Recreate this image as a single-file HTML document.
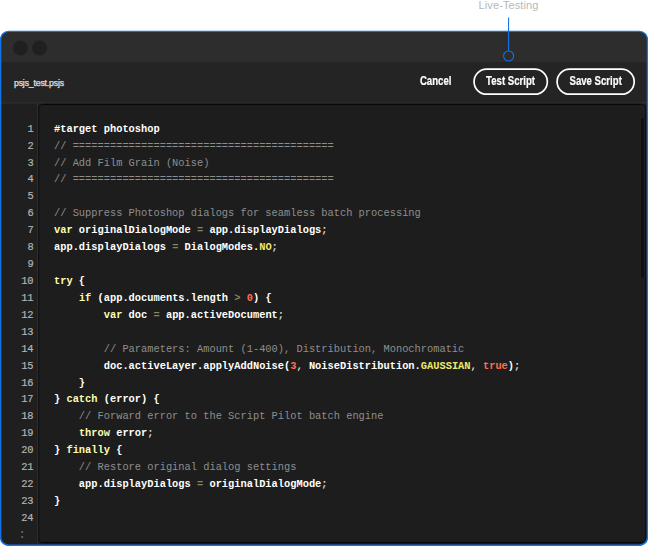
<!DOCTYPE html>
<html>
<head>
<meta charset="utf-8">
<title>psjs_test.psjs</title>
<style>
html,body{margin:0;padding:0;background:#fff;}
body{width:648px;height:546px;position:relative;overflow:hidden;font-family:"Liberation Sans",sans-serif;}
#frame{position:absolute;left:0;top:0;width:648px;height:546px;}
.abs{position:absolute;white-space:nowrap;}
#live{left:478px;top:-2.2px;width:61px;text-align:center;font-size:11px;line-height:14px;color:#b8b8b8;letter-spacing:0.1px;}
#fname{left:14px;top:75.5px;font-size:8.7px;line-height:14px;color:#e0e0e0;letter-spacing:-0.16px;-webkit-text-stroke:0.25px #e0e0e0;}
.btn{font-weight:bold;font-size:12px;line-height:14px;color:#fff;text-align:center;-webkit-text-stroke:0.2px #fff;}
.btn span{display:inline-block;transform:scaleX(0.8);transform-origin:50% 50%;}
#cancel{left:410px;width:52px;top:74px;}
#test{left:473px;width:75px;top:74px;}
#save{left:556.3px;width:78px;top:74px;}
#gutter{left:0;top:120.7px;width:33.6px;-webkit-text-stroke:0.2px #b4b4b4;text-align:right;font-family:"Liberation Mono",monospace;font-size:10.36px;line-height:16.93px;color:#b4b4b4;}
#gutter div{height:16.93px;}
#code{left:54px;top:120.7px;font-family:"Liberation Mono",monospace;font-size:10.36px;line-height:16.93px;color:#fff;font-weight:bold;}
#code div{height:16.93px;white-space:pre;}
#more{left:18.4px;top:526.5px;font-family:"Liberation Mono",monospace;font-size:12px;line-height:17px;color:#5c6474;font-weight:bold;}
.c{color:#8e8e8e;font-weight:normal;}
.k{color:#ffffb0;}
.o{color:#88835c;}
.n{color:#ff6e4a;}
.y{color:#f0e86a;}
.p{color:#d8d8d8;}
</style>
</head>
<body>
<svg id="frame" width="648" height="546" viewBox="0 0 648 546">
  <defs>
    <clipPath id="win"><path d="M8.50,31.4H639.50A8,8 0 0 1 647.5,39.40V537.40A8,8 0 0 1 639.50,545.4H8.50A8,8 0 0 1 0.5,537.40V39.40A8,8 0 0 1 8.50,31.4Z"/></clipPath>
    <filter id="blur1" x="-5%" y="-5%" width="110%" height="110%"><feGaussianBlur stdDeviation="0.7"/></filter>
    <clipPath id="codeclip"><rect x="38.3" y="103.8" width="607.6" height="439.4" rx="4.5" ry="4.5"/></clipPath>
  </defs>
  <!-- window body -->
  <g clip-path="url(#win)">
    <rect x="0" y="31" width="648" height="515" fill="#1f1f1f"/>
    <rect x="0" y="61" width="648" height="42" fill="#242424"/>
    <rect x="0" y="31" width="648" height="31" fill="#2d2d2d"/>
    <!-- separators -->
    <rect x="0" y="102.5" width="648" height="1" fill="#323232"/>
    <rect x="37" y="103" width="1" height="442" fill="#2c2c2c"/>
    <!-- code area -->
    <rect x="38.3" y="103.8" width="607.6" height="439.4" rx="4.5" ry="4.5" fill="#1d1d1d"/>
    <g clip-path="url(#codeclip)">
      <rect x="38.3" y="103.8" width="607.6" height="439.4" rx="4.5" ry="4.5" fill="none" stroke="#090909" stroke-width="1.7" filter="url(#blur1)"/>
    </g>
    <!-- scrollbar -->
    <rect x="641" y="118" width="3" height="160" rx="1.5" ry="1.5" fill="#101010"/>
  </g>
  <!-- window border -->
  <path d="M8.50,30.75H639.50A8.6,8.6 0 0 1 648.1,39.35V537.50A8.6,8.6 0 0 1 639.50,546.1H8.50A8.6,8.6 0 0 1 -0.1,537.50V39.35A8.6,8.6 0 0 1 8.50,30.75ZM8.60,32.1H639.45A7.3,7.3 0 0 1 646.75,39.40V537.20A7.3,7.3 0 0 1 639.45,544.5H8.60A7.3,7.3 0 0 1 1.3,537.20V39.40A7.3,7.3 0 0 1 8.60,32.1Z" fill="#1473e6" fill-rule="evenodd"/>
  <!-- traffic dots -->
  <circle cx="20.5" cy="48" r="7.5" fill="#202020"/>
  <circle cx="39.5" cy="48" r="7.5" fill="#202020"/>
  <!-- callout -->
  <rect x="508" y="17.5" width="1.1" height="34" fill="#1473e6"/>
  <circle cx="508.6" cy="56" r="5" fill="#2d2d2d" stroke="#1473e6" stroke-width="1.1"/>
  <!-- buttons -->
  <rect x="474.05" y="69.1" width="73.3" height="25.1" rx="12.55" ry="12.55" fill="none" stroke="#ffffff" stroke-width="1.7"/>
  <rect x="557.1" y="69.1" width="77.1" height="25.1" rx="12.55" ry="12.55" fill="none" stroke="#ffffff" stroke-width="1.7"/>
</svg>

<div class="abs" id="live">Live-Testing</div>
<div class="abs" id="fname">psjs_test.psjs</div>
<div class="abs btn" id="cancel"><span>Cancel</span></div>
<div class="abs btn" id="test"><span>Test Script</span></div>
<div class="abs btn" id="save"><span>Save Script</span></div>

<div class="abs" id="gutter">
<div>1</div><div>2</div><div>3</div><div>4</div><div>5</div><div>6</div><div>7</div><div>8</div><div>9</div><div>10</div><div>11</div><div>12</div><div>13</div><div>14</div><div>15</div><div>16</div><div>17</div><div>18</div><div>19</div><div>20</div><div>21</div><div>22</div><div>23</div><div>24</div>
</div>
<div class="abs" id="more">:</div>

<div class="abs" id="code">
<div>#target photoshop</div>
<div class="c">// ==========================================</div>
<div class="c">// Add Film Grain (Noise)</div>
<div class="c">// ==========================================</div>
<div> </div>
<div class="c">// Suppress Photoshop dialogs for seamless batch processing</div>
<div><span class="k">var</span> originalDialogMode <span class="o">=</span> app.displayDialogs<span class="p">;</span></div>
<div>app.displayDialogs <span class="o">=</span> DialogModes.<span class="y">NO</span><span class="p">;</span></div>
<div> </div>
<div><span class="k">try</span> {</div>
<div>    <span class="k">if</span> (app.documents.length <span class="o">&gt;</span> <span class="n">0</span>) {</div>
<div>        <span class="k">var</span> doc <span class="o">=</span> app.activeDocument<span class="p">;</span></div>
<div> </div>
<div class="c">        // Parameters: Amount (1-400), Distribution, Monochromatic</div>
<div>        doc.activeLayer.applyAddNoise(<span class="n">3</span><span class="p">,</span> NoiseDistribution.<span class="y">GAUSSIAN</span><span class="p">,</span> <span class="n">true</span>)<span class="p">;</span></div>
<div>    }</div>
<div>} <span class="k">catch</span> (error) {</div>
<div class="c">    // Forward error to the Script Pilot batch engine</div>
<div>    <span class="k">throw</span> error<span class="p">;</span></div>
<div>} <span class="k">finally</span> {</div>
<div class="c">    // Restore original dialog settings</div>
<div>    app.displayDialogs <span class="o">=</span> originalDialogMode<span class="p">;</span></div>
<div>}</div>
<div> </div>
</div>
</body>
</html>
